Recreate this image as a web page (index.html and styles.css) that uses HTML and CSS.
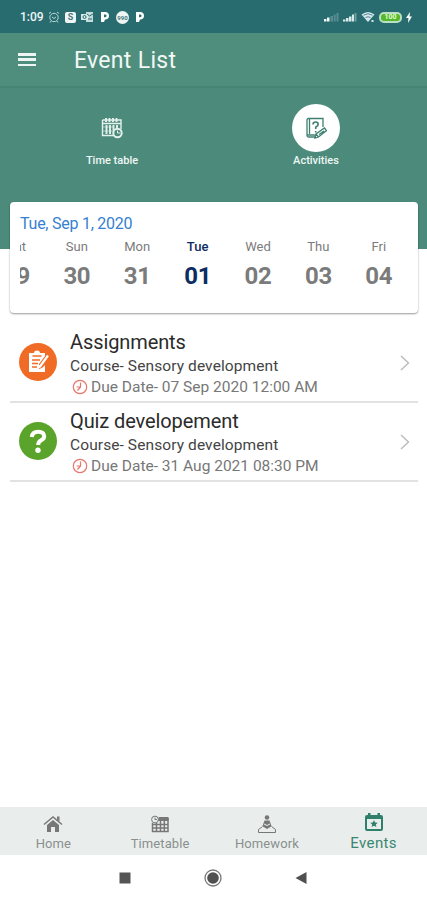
FILE: index.html
```html
<!DOCTYPE html>
<html lang="en">

<head>
    <meta charset="UTF-8">
    <title>Event List</title>
    <meta name="viewport" content="width=device-width, initial-scale=1">
    <link rel="stylesheet" href="styles.css">
</head>

<body>
    <div class="status-bar">
        <span class="time">1:09</span>
        <div class="status-left">
            <svg width="12" height="12" viewBox="0 0 12 12" fill="none" stroke="#b9d6d6">
                <circle cx="6" cy="6.5" r="4.2" />
                <path d="M1 2.5L3 1M11 2.5L9 1M4 6l2 1.5L8 6M3 10l-1 1.5M9 10l1 1.5" />
            </svg>
            <span class="app-badge">S</span>
            <svg width="13" height="12" viewBox="0 0 13 12">
                <path fill="#c4dcdc" d="M5 1h7v10H5z" />
                <path fill="#d9e8e8" d="M0 3h7v6H0z" />
                <path d="M6 3l2.5 2L12 3M7 8h4" stroke="#286c70" fill="none" />
                <circle cx="3.5" cy="6" r="1.5" fill="none" stroke="#286c70" />
            </svg>
            <svg class="p-icon" width="10" height="12" viewBox="0 0 10 12">
                <path fill="#fff" fill-rule="evenodd" d="M1 1h4a4 3.8 0 0 1 0 7.6L4 11H1zM4 3.5v2.7h1.2a1.3 1.3 0 0 0 0-2.7z" />
            </svg>
            <span class="round-badge">990</span>
            <svg class="p-icon" width="10" height="12" viewBox="0 0 10 12">
                <path fill="#fff" fill-rule="evenodd" d="M1 1h4a4 3.8 0 0 1 0 7.6L4 11H1zM4 3.5v2.7h1.2a1.3 1.3 0 0 0 0-2.7z" />
            </svg>
        </div>
        <div class="status-right">
            <svg width="15" height="10" viewBox="0 0 15 10">
                <path fill="#eef6f6" d="M0 7h2.5v2.5H0zM3 5.5h2.5v4H3z" />
                <path fill="#568d90" d="M6.5 4H9v5.5H6.5zM9.700 2.500h2v7h-2zM12.500 1h2v8.500h-2z" />
            </svg>
            <svg width="14" height="10" viewBox="0 0 14 10">
                <path fill="#d9eaeb" d="M0 7.500h2.500v2H0zM3 6h2.500v3.500H3zM6 4.500h2.500v5H6zM9 2.500h2v7H9z" />
                <path fill="#6c9fa1" d="M11.500 1h2v8.500h-2z" />
            </svg>
            <svg width="14" height="12" viewBox="0 0 14 12">
                <path fill="#d5e8ee" d="M.5 3.500Q7-1.500 13.500 3.500L7 11z" />
                <path d="M2.500 4.200Q7 1.200 11.500 4.200M4.500 6.500Q7 5 9.500 6.500" fill="none" stroke="#4e8790" />
                <path fill="#d5e8ee" d="M10.500 9h2v2h-2z" />
            </svg>
            <span class="battery">100</span>
            <svg width="6" height="11" viewBox="0 0 6 11">
                <path fill="#fff" d="M4 0L0 6h2.500L2 11l4-6.500H3.500z" />
            </svg>
        </div>
    </div>

    <header class="toolbar">
        <div class="menu-icon"><i></i><i></i><i></i></div>
        <h1>Event List</h1>
    </header>

    <div class="hero">
        <div class="tab">
            <div class="tab-icon">
                <svg width="22" height="22" viewBox="0 0 22 22" fill="none" stroke="#e4f1ed">
                    <path stroke-width="1.400" d="M1.500 3h18.500v9M1.500 3v15.500h11M1.500 6.500H20" />
                    <path stroke-width="1.900" d="M5 1v4M8.500 1v4M12 1v4M15.500 1v4M5.500 8v9M9 8v9M12.500 8v5M16 8v3" />
                    <path stroke-width=".6" d="M2 10h11M2 14h10" />
                    <circle cx="16.500" cy="16" r="4.200" stroke-width="2" />
                    <path d="M16.500 13.500V16H19" />
                </svg>
            </div>
            <span>Time table</span>
        </div>
        <div class="tab">
            <div class="tab-icon active">
                <svg width="22" height="24" viewBox="0 0 22 24" fill="none" stroke="#40806f" stroke-width="1.300">
                    <path d="M18 11V2.500H3.500Q2 2.500 2 4v15.500q0 1.500 1.500 1.500H10M2 19h8M4.500 3v15" />
                    <path stroke-width="1.600" d="M8 8.500q0-2.500 2.600-2.500t2.600 2.300q0 1.500-2.500 3v1.800M10.700 15v1.500" />
                    <path d="M10 22l1-4 8.500-6 2 2.600L13.500 21zM11 18l2.500 3M14 18.500l5-3.500" />
                </svg>
            </div>
            <span>Activities</span>
        </div>
    </div>

    <section class="calendar">
        <p class="date">Tue, Sep 1, 2020</p>
        <div class="days">
            <div class="day"><span>Sat</span><b>29</b></div>
            <div class="day"><span>Sun</span><b>30</b></div>
            <div class="day"><span>Mon</span><b>31</b></div>
            <div class="day selected"><span>Tue</span><b>01</b></div>
            <div class="day"><span>Wed</span><b>02</b></div>
            <div class="day"><span>Thu</span><b>03</b></div>
            <div class="day"><span>Fri</span><b>04</b></div>
        </div>
    </section>

    <ul class="events">
        <li class="event">
            <div class="event-icon orange">
                <svg width="38" height="38" viewBox="0 0 38 38">
                    <path fill="#fff" d="M10 10h5q0-2.500 3-2.500T21 10h5v3l-6 8v5l3-1 3-3v7H10z" />
                    <path d="M13.500 13h9" stroke="#f06b25" stroke-width="1.500" />
                    <path d="M13 17h8M13 20.500h6M13 24h5" stroke="#f06b25" stroke-width="1.300" />
                    <path d="M21 23.500l8-11" stroke="#fff" stroke-width="2.200" />
                    <path fill="#fff" d="M20 22l2.500 2-3 1.500z" />
                </svg>
            </div>
            <div class="event-text">
                <h2>Assignments</h2>
                <p class="course">Course- Sensory development</p>
                <p class="due">
                    <svg width="16" height="16" viewBox="0 0 16 16" fill="none" stroke="#e9756b" stroke-width="1.200">
                        <circle cx="8" cy="8" r="6.700" />
                        <path d="M4.500 8h4V3.500M8.500 8l-3 3.500" />
                    </svg>
                    <span>Due Date- 07 Sep 2020 12:00 AM</span>
                </p>
            </div>
            <svg class="arrow" width="10" height="16" viewBox="0 0 10 16">
                <path d="M1 1l7.500 7L1 15" fill="none" stroke="#bbb" stroke-width="1.400" />
            </svg>
        </li>
        <li class="event">
            <div class="event-icon green">
                <svg width="38" height="38" viewBox="0 0 38 38">
                    <path d="M12.800 15q.5-5.300 6.400-5.300t6 4.600q0 2.500-3.300 4.300-2.700 1.400-2.700 4.400" fill="none" stroke="#fff" stroke-width="4" />
                    <circle cx="19" cy="28.300" r="2.700" fill="#fff" />
                </svg>
            </div>
            <div class="event-text">
                <h2>Quiz developement</h2>
                <p class="course">Course- Sensory development</p>
                <p class="due">
                    <svg width="16" height="16" viewBox="0 0 16 16" fill="none" stroke="#e9756b" stroke-width="1.200">
                        <circle cx="8" cy="8" r="6.700" />
                        <path d="M4.500 8h4V3.500M8.500 8l-3 3.500" />
                    </svg>
                    <span>Due Date- 31 Aug 2021 08:30 PM</span>
                </p>
            </div>
            <svg class="arrow" width="10" height="16" viewBox="0 0 10 16">
                <path d="M1 1l7.500 7L1 15" fill="none" stroke="#bbb" stroke-width="1.400" />
            </svg>
        </li>
    </ul>

    <nav class="bottom-nav">
        <div class="nav-item">
            <svg width="20" height="18" viewBox="0 0 20 18">
                <path d="M1 9.500L10 2l9 7.500" fill="none" stroke="#777" stroke-width="1.500" />
                <path fill="#777" d="M14 1.500h2.500v5L14 4.500zM4 10l6-5 6 5v7h-4v-5H8v5H4z" />
            </svg>
            <span>Home</span>
        </div>
        <div class="nav-item">
            <svg width="20" height="18" viewBox="0 0 20 18" fill="none" stroke="#777">
                <path fill="#777" stroke="none" d="M9 2h9.500v4H7z" />
                <path stroke-width="1.500" d="M2.500 8v8.500h15.500V3M2 9.500h16M2 13h16M6.500 8v8M10.500 4v12M14.300 4v12" />
                <circle cx="5" cy="4.500" r="3.400" fill="#e9eeed" />
                <path d="M5 2.500v2h2" />
            </svg>
            <span>Timetable</span>
        </div>
        <div class="nav-item">
            <svg width="20" height="20" viewBox="0 0 20 20">
                <circle cx="10" cy="3.500" r="2.300" fill="#777" />
                <path fill="#777" d="M7.500 6.500h5L14.500 12l-4.500 2.500L5.500 12z" />
                <path d="M5.500 12.500L1.500 15.500v3h17v-3l-4-3M6 12l4 2.500 4-2.500" fill="none" stroke="#777" />
                <path d="M7 10l3 1.500 3-1.500" stroke="#e9eeed" fill="none" />
            </svg>
            <span>Homework</span>
        </div>
        <div class="nav-item current">
            <svg width="18" height="19" viewBox="0 0 18 19">
                <path fill="#2f806b" fill-rule="evenodd" d="M3 0h2.500v2h7V0H15v2h1q2 0 2 2v12q0 2-2 2H2q-2 0-2-2V4q0-2 2-2h1zM2 6v10h14V6z" />
                <path fill="#2f806b" d="M9 7l1.100 2.400 2.700.3-2 1.800.6 2.600L9 12.800l-2.400 1.300.6-2.600-2-1.800 2.700-.3z" />
            </svg>
            <span>Events</span>
        </div>
    </nav>

    <div class="system-nav">
        <svg width="12" height="12"><path fill="#555" d="M.5.5h11v11H.5z" /></svg>
        <svg width="18" height="18" viewBox="0 0 18 18">
            <circle cx="9" cy="9" r="8" fill="none" stroke="#777" stroke-width="1.300" />
            <circle cx="9" cy="9" r="5.800" fill="#505050" />
        </svg>
        <svg width="12" height="14" viewBox="0 0 12 14"><path fill="#505050" d="M11.500 1v12L.5 7z" /></svg>
    </div>
</body>

</html>
```
FILE: styles.css
```css
* {
    margin: 0;
    padding: 0;
    box-sizing: border-box;
}

body {
    font-family: Roboto, sans-serif;
    background-color: #fff;
    width: 427px;
    height: 900px;
    display: flex;
    flex-direction: column;
    overflow: hidden;
}

svg {
    display: block;
    flex-shrink: 0;
}

/* status bar */
.status-bar {
    height: 33px;
    background-color: #286c70;
    display: flex;
    align-items: center;
    padding: 1px 15px 0 20px;
    color: #eef6f6;
}

.time {
    font-size: 12px;
    font-weight: 500;
    width: 28px;
}

.status-left,
.status-right {
    display: flex;
    align-items: center;
}

.status-left {
    gap: 5px;
}

.app-badge {
    width: 11px;
    height: 11px;
    border-radius: 2px;
    background-color: #eef5f5;
    color: #49777a;
    font-size: 9px;
    font-weight: 700;
    line-height: 11px;
    text-align: center;
}

.p-icon {
    margin: 0 1px;
}

.round-badge {
    width: 13px;
    height: 13px;
    border-radius: 50%;
    background-color: #eef5f5;
    color: #49777a;
    font-size: 6px;
    font-weight: 700;
    line-height: 13px;
    text-align: center;
}

.status-right {
    gap: 4px;
    margin-left: auto;
}

.battery {
    width: 23px;
    height: 11px;
    border: 2px solid #b9dfc4;
    border-radius: 5px;
    background-color: #55b82c;
    color: #e5ffd2;
    font-size: 7px;
    font-weight: 700;
    line-height: 7px;
    text-align: center;
}

/* toolbar */
.toolbar {
    height: 55px;
    background-color: #4f8e7c;
    border-bottom: 2px solid #488473;
    display: flex;
    align-items: center;
    padding-left: 18px;
    color: #f1f8f5;
}

.menu-icon {
    width: 18px;
    height: 13px;
    display: flex;
    flex-direction: column;
    justify-content: space-between;
    margin-right: 38px;
}

.menu-icon i {
    height: 2.5px;
    background-color: #edf6f3;
}

h1 {
    font-size: 23px;
    font-weight: 400;
    letter-spacing: 0.3px;
    padding-top: 2px;
}

.hero {
    height: 161px;
    flex-shrink: 0;
    background-color: #4c8b7b;
    display: flex;
    padding: 16px 9px 0 10px;
}

.tab {
    width: 204px;
    display: flex;
    flex-direction: column;
    align-items: center;
    color: #eff7f4;
    font-size: 11px;
    font-weight: 500;
    line-height: 17px;
}

.tab-icon {
    width: 48px;
    height: 48px;
    border-radius: 50%;
    display: flex;
    align-items: center;
    justify-content: center;
}

.tab-icon.active {
    background-color: #fff;
}

/* week strip */
.calendar {
    height: 111px;
    flex-shrink: 0;
    margin: -47px 9px 0 10px;
    padding: 12px 9px 0 10px;
    background-color: #fff;
    border-radius: 4px;
    box-shadow: 0 1px 2px rgba(0, 0, 0, 0.4);
}

.date {
    color: #3780d2;
    font-size: 16px;
    line-height: 19px;
    letter-spacing: -0.25px;
    margin-bottom: 1px;
}

.days {
    display: flex;
    justify-content: flex-end;
    overflow: hidden;
}

.day {
    width: 60.4px;
    flex-shrink: 0;
    display: flex;
    flex-direction: column;
    align-items: center;
    color: #7b7b7b;
}

.day span {
    font-size: 13px;
    line-height: 26px;
}

.day b {
    font-size: 24px;
    line-height: 32px;
    font-weight: 700;
    letter-spacing: -0.3px;
}

.day.selected {
    color: #0d2d62;
}

.day.selected span {
    font-weight: 500;
}

/* event list */
.events {
    list-style: none;
    margin: 11px 9px 0 10px;
}

.event {
    height: 79px;
    border-bottom: 2px solid #e2e2e2;
    display: flex;
    align-items: flex-start;
    padding: 6px 8px 0 9px;
}

.event-icon {
    width: 38px;
    height: 38px;
    border-radius: 50%;
    margin-top: 13px;
}

.orange {
    background-color: #f06b25;
}

.green {
    background-color: #5ba42b;
}

.event-text {
    margin-left: 13px;
    flex-grow: 1;
}

h2 {
    font-size: 20px;
    font-weight: 400;
    line-height: 24px;
    letter-spacing: -0.1px;
    margin-bottom: 1px;
    color: #2b2b2b;
}

.course {
    font-size: 15.5px;
    line-height: 22px;
    letter-spacing: 0.1px;
    color: #444;
}

.due {
    display: flex;
    align-items: center;
    gap: 3px;
    padding-left: 2px;
    font-size: 15.5px;
    line-height: 21px;
    color: #777;
}

.due svg {
    margin-bottom: 2px;
}

.arrow {
    margin-top: 25px;
}

/* bottom navigation */
.bottom-nav {
    height: 48px;
    flex-shrink: 0;
    margin-top: auto;
    background-color: #e9eeed;
    display: flex;
}

.nav-item {
    flex: 1;
    display: flex;
    flex-direction: column;
    align-items: center;
    justify-content: flex-end;
    padding-bottom: 3px;
    color: #8a8f8e;
    font-size: 13px;
    line-height: 17px;
    letter-spacing: 0.1px;
}

.nav-item svg {
    margin-bottom: 2px;
}

.nav-item:nth-child(3) svg {
    margin-bottom: 1px;
}

.nav-item.current {
    color: #3b8671;
    font-size: 15px;
    letter-spacing: 0.4px;
}

.nav-item.current svg {
    margin-bottom: 3px;
}

.system-nav {
    height: 45px;
    flex-shrink: 0;
    display: flex;
    align-items: center;
    justify-content: center;
    gap: 73px;
    padding-right: 1px;
}
```
